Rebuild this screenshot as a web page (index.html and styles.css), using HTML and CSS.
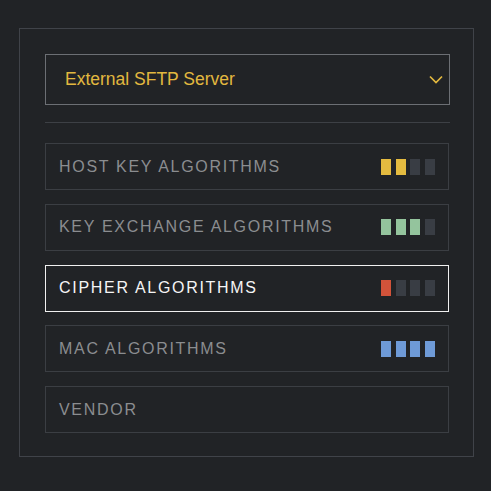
FILE: index.html
```
<!DOCTYPE html>
<html>
<head>
<meta charset="UTF-8">
<title>SFTP Algorithms</title>
<link rel="stylesheet" href="styles.css">
</head>
<body>

<div class="frame">

  <div class="select">
    <span>External SFTP Server</span>
    <svg class="chevron" width="14" height="9" viewBox="0 0 14 9">
      <path d="M1 1.5 L7 7.5 L13 1.5" fill="none" stroke="#e2b83f" stroke-width="1.7"/>
    </svg>
  </div>

  <div class="divider"></div>

  <div class="list">
    <div class="row">
      <span class="label">HOST KEY ALGORITHMS</span>
      <div class="bars yellow"><i class="on"></i><i class="on"></i><i></i><i></i></div>
    </div>
    <div class="row">
      <span class="label">KEY EXCHANGE ALGORITHMS</span>
      <div class="bars green"><i class="on"></i><i class="on"></i><i class="on"></i><i></i></div>
    </div>
    <div class="row active">
      <span class="label">CIPHER ALGORITHMS</span>
      <div class="bars red"><i class="on"></i><i></i><i></i><i></i></div>
    </div>
    <div class="row">
      <span class="label">MAC ALGORITHMS</span>
      <div class="bars blue"><i class="on"></i><i class="on"></i><i class="on"></i><i class="on"></i></div>
    </div>
    <div class="row">
      <span class="label">VENDOR</span>
    </div>
  </div>

</div>

</body>
</html>
```

FILE: styles.css
```
body{
    margin:0;
    background:#212326;
    font-family:"Liberation Sans", Arial, sans-serif;
}

.frame{
    margin:28px 0 0 19px;
    width:405px;
    padding:25px 23px 23px 25px;
    border:1px solid #404349;
}

/* DROPDOWN */
.select{
    height:49px;
    border:1px solid #6c6f74;
    display:flex;
    align-items:center;
    justify-content:space-between;
    padding:0 6px 0 19px;
    color:#e2b83f;
    font-size:17.5px;
}

.chevron{
    margin-top:0;
}

.divider{
    height:1px;
    background:#3d4045;
    margin:17px 0 20px 0;
}

/* LIST */
.list{
    display:flex;
    flex-direction:column;
    gap:13.75px;
    width:404px;
}

.row{
    height:45px;
    border:1px solid #3b3e43;
    display:flex;
    align-items:center;
    justify-content:space-between;
    padding:0 13px 0 13px;
}

.label{
    color:#8b8d90;
    font-size:16px;
    letter-spacing:1.7px;
}

.row.active{
    border-color:#f0f0f0;
}

.row.active .label{
    color:#f5f5f5;
}

.bars{
    display:flex;
    gap:4.7px;
}

.bars i{
    width:10px;
    height:16px;
    background:#393d44;
}

.yellow .on{background:#e4bb40;}
.green .on{background:#94c49d;}
.red .on{background:#d2533a;}
.blue .on{background:#6e9ad7;}
```
